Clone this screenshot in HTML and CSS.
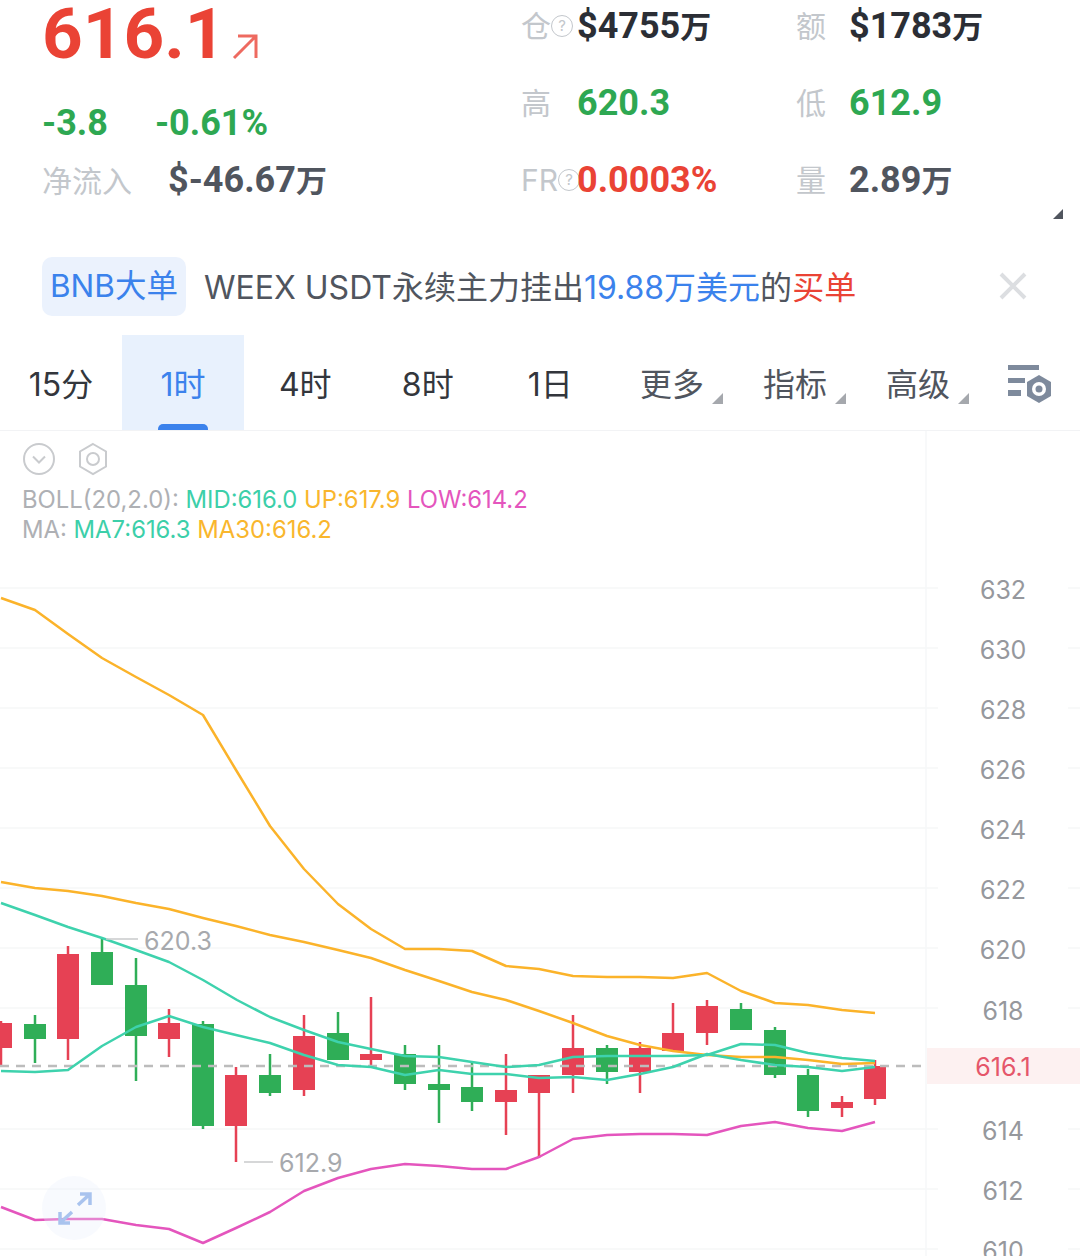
FILE: index.html
```html
<!DOCTYPE html>
<html lang="zh-CN">
<head>
    <meta charset="UTF-8">
    <meta name="viewport" content="width=device-width, initial-scale=1.0">
    <title>BNB 1时</title>
    <link rel="stylesheet" href="styles.css">
</head>
<body>
    <div class="container">
        <div class="summary">
            <div class="price-area">
                <div class="price-row">
                    <span class="price">616.1</span>
                    <svg class="price-arrow" width="28" height="28" viewBox="0 0 28 28"><path d="M3 26 25 4M7 4h18v22"/></svg>
                </div>
                <div class="change-row">
                    <span>-3.8</span>
                    <span>-0.61%</span>
                </div>
                <div class="flow-row">
                    <span class="label">净流入</span>
                    <span class="value dark">$-46.67<small>万</small></span>
                </div>
            </div>
            <div class="stats">
                <div class="stat"><span class="label">仓<i class="help">?</i></span><span class="value black">$4755<small>万</small></span></div>
                <div class="stat"><span class="label">额</span><span class="value black">$1783<small>万</small></span></div>
                <div class="stat"><span class="label">高</span><span class="value green">620.3</span></div>
                <div class="stat"><span class="label">低</span><span class="value green">612.9</span></div>
                <div class="stat"><span class="label">FR<i class="help">?</i></span><span class="value red">0.0003%</span></div>
                <div class="stat"><span class="label">量</span><span class="value dark">2.89<small>万</small></span></div>
            </div>
            <span class="corner corner-summary"></span>
        </div>

        <div class="notice">
            <span class="notice-tag">BNB大单</span>
            <span class="notice-text">WEEX USDT永续主力挂出<em>19.88万美元</em>的<b>买单</b></span>
            <svg class="notice-close" width="30" height="30" viewBox="0 0 30 30"><path d="M3 3 27 27M27 3 3 27"/></svg>
        </div>

        <div class="tabs">
            <div class="tab">15分</div>
            <div class="tab active">1时</div>
            <div class="tab">4时</div>
            <div class="tab">8时</div>
            <div class="tab">1日</div>
            <div class="tab">更多<span class="corner"></span></div>
            <div class="tab">指标<span class="corner"></span></div>
            <div class="tab">高级<span class="corner"></span></div>
            <svg class="tab-settings" width="46" height="40" viewBox="0 0 46 40">
                <path class="bar" d="M1 1h31v5H1zM1 14h17v5H1zM1 26h13v6H1z"/>
                <path class="nut" d="M32 11 44 18v14l-12 7-12-7V18z"/>
                <circle class="nut-hole" cx="32" cy="25" r="7"/>
                <circle class="nut" cx="32" cy="25" r="3.500"/>
            </svg>
        </div>

        <div class="chart">
            <div class="chart-head">
                <div class="chart-icons">
                    <svg width="34" height="34" viewBox="0 0 34 34"><circle cx="17" cy="17" r="15"/><path d="M11 14.500 17 20.500 23 14.500"/></svg>
                    <svg width="34" height="34" viewBox="0 0 34 34"><path d="M17 2 30 9.500v15L17 32 4 24.500v-15z"/><circle cx="17" cy="17" r="6"/></svg>
                </div>
                <div class="legend"><span class="gray">BOLL(20,2.0):</span> <span class="teal">MID:616.0</span> <span class="gold">UP:617.9</span> <span class="pink">LOW:614.2</span></div>
                <div class="legend"><span class="gray">MA:</span> <span class="teal">MA7:616.3</span> <span class="gold">MA30:616.2</span></div>
            </div>

            <svg class="plot" width="1080" height="825" viewBox="0 431 1080 825">
                <g class="grid">
                    <path d="M0 588H938M1068 588H1080M0 648H938M1068 648H1080M0 708H938M1068 708H1080M0 768H938M1068 768H1080M0 828H938M1068 828H1080M0 888H938M1068 888H1080M0 948H938M1068 948H1080M0 1008H938M1068 1008H1080M0 1129H938M1068 1129H1080M0 1189H938M1068 1189H1080M0 1249H938M1068 1249H1080"/>
                    <path d="M926 431V1256"/>
                </g>
                <rect class="last-tag" x="927" y="1048" width="153" height="36"/>

                <g class="axis">
                    <text x="1003" y="599">632</text>
                    <text x="1003" y="659">630</text>
                    <text x="1003" y="719">628</text>
                    <text x="1003" y="779">626</text>
                    <text x="1003" y="839">624</text>
                    <text x="1003" y="899">622</text>
                    <text x="1003" y="959">620</text>
                    <text x="1003" y="1020">618</text>
                    <text class="last" x="1003" y="1076">616.1</text>
                    <text x="1003" y="1140">614</text>
                    <text x="1003" y="1200">612</text>
                    <text x="1003" y="1260">610</text>
                </g>

                <g class="up">
                    <path class="wick" d="M1 1021V1066M68 946V1060M169 1009V1057M236 1067V1162M304 1015V1096M371 997V1066M506 1054V1135M539 1075V1158M573 1015V1093M640 1042V1093M673 1003V1051M707 1000V1045M842 1096V1117M875 1060V1105"/>
                    <rect x="-10" y="1023" width="22" height="25"/>
                    <rect x="57" y="954" width="22" height="85"/>
                    <rect x="158" y="1023" width="22" height="16"/>
                    <rect x="225" y="1075" width="22" height="51"/>
                    <rect x="293" y="1036" width="22" height="54"/>
                    <rect x="360" y="1054" width="22" height="6"/>
                    <rect x="495" y="1090" width="22" height="12"/>
                    <rect x="528" y="1075" width="22" height="18"/>
                    <rect x="562" y="1048" width="22" height="27"/>
                    <rect x="629" y="1048" width="22" height="24"/>
                    <rect x="662" y="1033" width="22" height="18"/>
                    <rect x="696" y="1006" width="22" height="27"/>
                    <rect x="831" y="1102" width="22" height="6"/>
                    <rect x="864" y="1066" width="22" height="33"/>
                </g>
                <g class="down">
                    <path class="wick" d="M35 1015V1063M102 939V985M136 958V1081M203 1021V1129M270 1054V1096M338 1012V1060M405 1045V1090M439 1045V1123M472 1061V1111M607 1045V1084M741 1003V1030M775 1027V1078M808 1069V1117"/>
                    <rect x="24" y="1024" width="22" height="15"/>
                    <rect x="91" y="952" width="22" height="33"/>
                    <rect x="125" y="985" width="22" height="51"/>
                    <rect x="192" y="1024" width="22" height="102"/>
                    <rect x="259" y="1075" width="22" height="18"/>
                    <rect x="327" y="1033" width="22" height="27"/>
                    <rect x="394" y="1054" width="22" height="30"/>
                    <rect x="428" y="1084" width="22" height="6"/>
                    <rect x="461" y="1087" width="22" height="15"/>
                    <rect x="596" y="1048" width="22" height="24"/>
                    <rect x="730" y="1009" width="22" height="21"/>
                    <rect x="764" y="1030" width="22" height="45"/>
                    <rect x="797" y="1075" width="22" height="36"/>
                </g>

                <path class="last-line" d="M0 1066H926"/>

                <g class="lines">
                    <polyline class="line-gold" points="1,598 35,610 68,634 102,658 136,677 169,695 203,715 236,770 270,826 304,869 338,904 371,929 405,949 439,949 472,951 506,966 539,969 573,976 607,977 640,977 673,978 707,973 741,991 775,1003 808,1005 842,1010 875,1013"/>
                    <polyline class="line-gold" points="1,882 35,888 68,891 102,896 136,903 169,909 203,918 236,926 270,935 304,942 338,950 371,958 405,970 439,981 472,992 506,1000 539,1011 573,1023 607,1036 640,1045 673,1051 707,1055 741,1057 775,1057 808,1060 842,1064 875,1063"/>
                    <polyline class="line-teal" points="1,903 35,915 68,927 102,938 136,950 169,962 203,980 237,1000 270,1017 304,1030 338,1042 371,1049 405,1056 439,1057 472,1062 506,1067 539,1065 573,1057 607,1056 640,1056 673,1056 707,1055 741,1044 775,1045 808,1053 842,1058 875,1061"/>
                    <polyline class="line-teal" points="1,1071 35,1072 68,1070 102,1046 136,1027 169,1016 203,1027 236,1035 270,1043 304,1055 338,1065 371,1067 405,1075 439,1070 472,1074 506,1074 539,1078 573,1077 607,1080 640,1074 673,1067 707,1054 741,1060 775,1065 808,1067 842,1071 875,1067"/>
                    <polyline class="line-pink" points="1,1207 35,1220 68,1219 102,1219 136,1225 169,1229 203,1243 236,1228 270,1212 304,1191 338,1178 371,1169 405,1164 439,1166 472,1169 506,1169 539,1157 573,1139 607,1135 640,1134 673,1134 707,1135 741,1126 775,1122 808,1128 842,1131 875,1122"/>
                </g>

                <g class="extreme">
                    <path d="M106 939H138M244 1162H273"/>
                    <text x="144" y="950">620.3</text>
                    <text x="279" y="1172">612.9</text>
                </g>
            </svg>

            <div class="expand">
                <svg width="38" height="34" viewBox="0 0 38 34"><path d="M23 14 35 3M25 3h10v11M17 21 5 32M5 21v11h10"/></svg>
            </div>
        </div>
    </div>
</body>
</html>
```

FILE: styles.css
```css
* {
    margin: 0;
    padding: 0;
    box-sizing: border-box;
}

body {
    font-family: 'Inter', 'Noto Sans CJK SC', sans-serif;
    background: white;
    color: #333;
    overflow: hidden;
}

.container {
    width: 1080px;
    height: 1256px;
    overflow: hidden;
}

/* top numbers */
.summary {
    position: relative;
    display: flex;
    height: 256px;
    padding-left: 42px;
}

.price-area {
    width: 479px;
}

.price-row {
    display: flex;
    align-items: flex-end;
    gap: 5px;
    height: 68px;
}

.price {
    font-family: 'Roboto', sans-serif;
    font-weight: 700;
    font-size: 71px;
    line-height: 68px;
    color: #ea4335;
}

.price-arrow {
    margin-bottom: 8px;
}

.price-arrow path {
    fill: none;
    stroke: #ee6a60;
    stroke-width: 3;
}

.change-row {
    display: flex;
    gap: 47px;
    margin-top: 34px;
    font-family: 'Roboto', sans-serif;
    font-weight: 700;
    font-size: 36px;
    line-height: 42px;
    color: #2ea852;
}

.flow-row {
    display: flex;
    gap: 36px;
    margin-top: 15px;
}

.label {
    display: inline-flex;
    align-items: center;
    font-size: 30px;
    line-height: 42px;
    color: #c3c7cc;
}

.value {
    font-family: 'Roboto', 'Noto Sans CJK SC', sans-serif;
    font-weight: 700;
    font-size: 36px;
    line-height: 42px;
}

.value small {
    font-size: 31px;
}

.dark {
    color: #50555e;
}

.black {
    color: #2b2e35;
}

.green {
    color: #2ea852;
}

.red {
    color: #ea4335;
}

.stats {
    display: grid;
    grid-template-columns: 275px 1fr;
    grid-auto-rows: 77px;
    margin-top: 5px;
}

.stat {
    display: flex;
    align-items: flex-start;
}

.stat .label {
    width: 56px;
    white-space: nowrap;
}

.stat:nth-child(even) .label {
    width: 53px;
}

.help {
    display: inline-block;
    flex: none;
    width: 22px;
    height: 22px;
    border: 1.5px solid #c3c7cc;
    border-radius: 50%;
    font-style: normal;
    font-size: 15px;
    line-height: 19px;
    text-align: center;
}

.corner {
    position: absolute;
    width: 0;
    height: 0;
    border-left: 11px solid transparent;
    border-bottom: 11px solid #a5a8ad;
}

.corner-summary {
    right: 17px;
    bottom: 37px;
    border-left-width: 10px;
    border-bottom-width: 10px;
    border-bottom-color: #50555e;
}

/* notice bar */
.notice {
    display: flex;
    align-items: center;
    height: 60px;
    margin-bottom: 19px;
    padding-left: 42px;
}

.notice-tag {
    padding: 0 8px;
    height: 59px;
    line-height: 57px;
    background: #ebf2fd;
    border-radius: 10px;
    font-size: 31.5px;
    color: #3b82ec;
}

.notice-text {
    margin-left: 18px;
    margin-bottom: 2px;
    font-size: 32px;
    color: #50555e;
    white-space: nowrap;
}

.notice-text em {
    font-style: normal;
    color: #3b82ec;
}

.notice-text b {
    font-weight: normal;
    color: #ea4335;
}

.notice-close {
    position: absolute;
    left: 998px;
    top: 271px;
}

.notice-close path {
    fill: none;
    stroke: #dcdee1;
    stroke-width: 4;
}

/* period tabs */
.tabs {
    position: relative;
    display: flex;
    height: 96px;
    border-bottom: 1px solid #f2f3f5;
}

.tab {
    position: relative;
    flex: none;
    width: 122.5px;
    display: flex;
    align-items: center;
    justify-content: center;
    padding-bottom: 1px;
    height: 95px;
    font-size: 32px;
    color: #33363c;
}

.tab:first-child,
.tab.active {
    width: 122px;
}

.tab:nth-child(n+6) {
    color: #50555e;
    width: 123px;
    padding-right: 2px;
}

.tab.active {
    background: #e8f1fd;
    color: #3b82ec;
}

.tab.active::after {
    content: "";
    position: absolute;
    left: 36px;
    bottom: 0;
    width: 50px;
    height: 6px;
    background: #3b82ec;
    border-radius: 5px 5px 0 0;
}

.tab .corner {
    left: 100px;
    bottom: 26px;
}

.tab-settings {
    flex: none;
    margin: 29px 0 0 26px;
}

.tab-settings .bar,
.tab-settings .nut {
    fill: #7e8a9c;
}

.tab-settings .nut-hole {
    fill: white;
}

/* chart */
.chart {
    position: relative;
    height: 825px;
}

.plot {
    display: block;
}

.chart-head {
    position: absolute;
    left: 22px;
    top: 11px;
}

.chart-icons {
    display: flex;
    gap: 20px;
    margin-bottom: 9px;
}

.chart-icons svg {
    fill: none;
    stroke: #c9cbce;
    stroke-width: 2;
}

.legend {
    font-size: 23.85px;
    line-height: 30px;
    white-space: nowrap;
}

.gray {
    color: #aeb0b4;
}

.teal {
    color: #3ccfa9;
}

.gold {
    color: #f9b62d;
}

.pink {
    color: #e455bd;
}

.grid path {
    fill: none;
    stroke: #f6f7f8;
    stroke-width: 1.5;
}

.last-tag {
    fill: #fdf1f1;
}

.axis text {
    font-size: 25px;
    fill: #96989d;
    text-anchor: middle;
}

.axis .last {
    fill: #e5566a;
}

.up {
    fill: #e64154;
}

.up .wick {
    fill: none;
    stroke: #e64154;
    stroke-width: 2.5;
}

.down {
    fill: #2fae57;
}

.down .wick {
    fill: none;
    stroke: #2fae57;
    stroke-width: 2.5;
}

.last-line {
    fill: none;
    stroke: #bcbcbc;
    stroke-width: 2.5;
    stroke-dasharray: 9 7;
}

.lines polyline {
    fill: none;
    stroke-width: 2.5;
    stroke-linejoin: round;
}

.line-gold {
    stroke: #fbb32a;
}

.line-teal {
    stroke: #3ed2ad;
}

.line-pink {
    stroke: #e455bd;
}

.extreme path {
    fill: none;
    stroke: #c9cacc;
    stroke-width: 1.5;
}

.extreme text {
    font-size: 25px;
    fill: #a7a9ad;
}

.expand {
    position: absolute;
    left: 42px;
    top: 745px;
    display: flex;
    align-items: center;
    justify-content: center;
    width: 64px;
    height: 64px;
    background: rgba(232, 240, 252, 0.3);
    border-radius: 50%;
}

.expand svg {
    fill: none;
    stroke: #a9c3ee;
    stroke-width: 3.5;
}
```
